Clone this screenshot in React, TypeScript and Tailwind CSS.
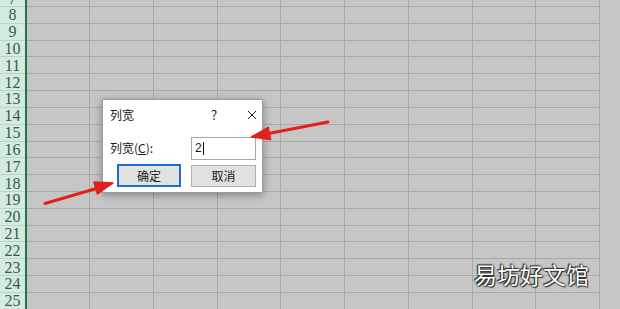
import React from "react";

const ROWS = Array.from({ length: 20 }, (_, i) => i + 7);
const COLS = 9;

function Row({ n }: { n: number }) {
  return (
    <div className="flex h-[16.82px] shrink-0">
      <div className="w-[25px] h-full shrink-0 bg-[#d5ebdf] border-b border-[#b9d6c6] flex items-center justify-center pt-[1px] text-[16px] leading-none text-[#355c48] [font-family:'Liberation_Serif','DejaVu_Serif',serif]">
        {n}
      </div>
      <div className="w-[2px] h-full shrink-0 bg-[#217346]" />
      <div className="w-[63px] h-full shrink-0 bg-[#c6c6c6] border-b border-r border-[#a9a9a9]" />
      {Array.from({ length: COLS - 1 }, (_, i) => (
        <div
          key={i}
          className="w-[63.75px] h-full shrink-0 bg-[#c6c6c6] border-b border-r border-[#a9a9a9]"
        />
      ))}
    </div>
  );
}

export default function App() {
  return (
    <div className="relative w-[620px] h-[309px] overflow-hidden bg-[#c6c6c6] [font-family:'Noto_Sans_CJK_SC','Noto_Sans',sans-serif]">
      <div className="flex flex-col mt-[-9.82px]">
        {ROWS.map((n) => (
          <Row key={n} n={n} />
        ))}
      </div>

      {/* Dialog */}
      <div className="absolute left-[102px] top-[99px] w-[161px] h-[94px] bg-white border border-[#9c9c9c] shadow-[0_2px_8px_rgba(0,0,0,0.35)] flex flex-col text-[12px] text-[#1a1a1a]">
        <div className="flex items-center h-[29px] pl-[7px] shrink-0">
          <span className="leading-none">列宽</span>
          <span className="ml-[77px] leading-none text-[13px]">?</span>
          <svg className="ml-[30px]" width="10" height="10" viewBox="0 0 10 10">
            <path d="M1 1L9 9M9 1L1 9" stroke="#222" strokeWidth="1" />
          </svg>
        </div>
        <div className="flex items-center pl-[7px] h-[26px] mt-[6px]">
          <span className="leading-none w-[80px]">
            列宽(<span className="underline underline-offset-1">C</span>):
          </span>
          <div className="w-[65px] h-[23px] border border-[#a7a7a7] bg-white flex items-center pl-[3px] ml-[1px]">
            <span className="text-[12px] leading-none [font-family:'Liberation_Sans',sans-serif]">2</span>
            <span className="w-[1px] h-[13px] bg-[#111] ml-[1px]" />
          </div>
        </div>
        <div className="flex items-start pl-[14px] mt-[3px]">
          <div className="w-[64px] h-[23px] border-2 border-[#1a6fd1] bg-[#e1e1e1] flex items-center justify-center leading-none">
            确定
          </div>
          <div className="w-[65px] h-[22px] ml-[10px] mt-[1px] border border-[#adadad] bg-[#e1e1e1] flex items-center justify-center leading-none">
            取消
          </div>
        </div>
      </div>

      {/* Arrows */}
      <svg className="absolute left-0 top-0" width="620" height="309" viewBox="0 0 620 309">
        <g fill="#e41f1f" stroke="#e41f1f" strokeLinecap="round" strokeLinejoin="round">
          <line x1="328" y1="122" x2="266" y2="134" strokeWidth="3" />
          <polygon points="251.5,137 268.2,127.3 270.6,139.5" strokeWidth="1.5" />
          <line x1="45" y1="203.5" x2="98" y2="188" strokeWidth="3" />
          <polygon points="113,183 94,182 97.4,194" strokeWidth="1.5" />
        </g>
      </svg>

      {/* Watermark */}
      <div className="absolute left-[474px] top-[260px] text-[23px] leading-[28px] text-white [text-shadow:0_0_1px_#111,0_0_2px_#222,1px_1px_1px_#333,-1px_-1px_1px_#333]">
        易坊好文馆
      </div>
    </div>
  );
}
